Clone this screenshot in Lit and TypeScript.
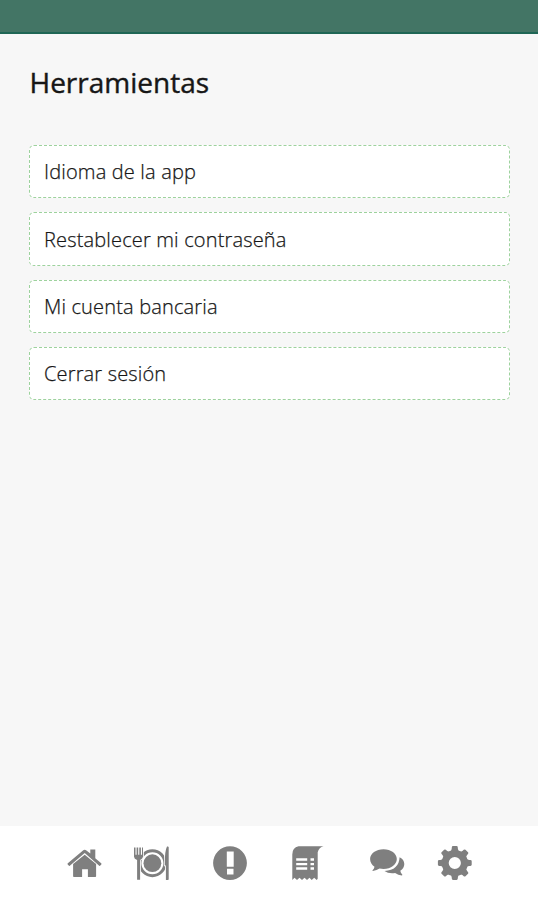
import { LitElement, html, css, svg } from "lit";
import { customElement } from "lit/decorators.js";

const teeth = [0, 45, 90, 135, 180, 225, 270, 315];

const icons = [
  // home
  svg`<g transform="translate(.7 .1)"><path d="M18 9.600 29.400 19v12.200a.8.8 0 0 1-.8.8h-7.400v-7.800h-5.800V32H7.200a.8.8 0 0 1-.8-.8V19z"/>
    <path d="M18 4.600q.9 0 1.700.7l3.900 3.200V4.500h5v8.700l5.900 5q.6.500.1 1.100l-1 1.200q-.5.500-1.100.1L18 8 3.100 20.600q-.6.400-1.100-.1l-1-1.200q-.5-.6.1-1.100L16.300 5.300q.8-.7 1.700-.7z"/></g>`,
  // plate with cutlery
  svg`<circle cx="19.400" cy="18.200" r="8.900"/>
    <circle class="rim" cx="19.400" cy="18.200" r="12.500"/>
    <path class="cut" d="M1 2.500h1.500v7.300h1.100V2.500h1.600v7.300h1.100V2.500h1.600v7.300H9V2.500h1v9.300q-.2 2.100-2.900 3.200v19.700H4.100V15Q1.200 14 1 11.800z"/>
    <path class="cut" d="M34 1.600q1.400-.6 1.700.6v32q0 .8-.8.8h-2V20.500h-1.200Q31.600 6 34 1.600z"/>`,
  // alert
  svg`<path fill-rule="evenodd" d="M18 1.200a16.900 16.900 0 1 0 0 33.800 16.900 16.900 0 0 0 0-33.800zM14.800 6.400h6.900v15.300h-6.900zM15 23.700h6.500v5.700H15z"/>`,
  // receipt
  svg`<path fill-rule="evenodd" d="M9.500 1.300H34.500Q30 2.500 28.700 7.300v26.400l-1 1.300-2.500-2.200-2.500 2.200-2.200-2.200-2.500 2.200-2.500-2.200-2.500 2.200-2.500-2.200-2.500 2.200-2.500-2.200L3.300 35V9.500q0-7 6.200-8.200zM7.200 13.300v2.400h11v-2.400zM7.200 18v2.200h11V18zM7.200 22.300v2.400h11v-2.400zM21.500 13.300v2.400h3.500v-2.400zM21.500 18v2.200H25V18zM21.500 22.300v2.400H25v-2.400z"/>`,
  // chat
  svg`<path d="M14.500 4.200c7.500 0 13.300 4.300 13.300 9.800s-5.800 9.900-13.300 9.900q-2 0-3.900-.3-2.900 2-6.700 2.400-.8-.1-.3-.8 1.500-1.400 1.900-3.500C2.700 19.900 1.100 17 1.100 14c0-5.500 5.900-9.800 13.400-9.800z"/>
    <path d="M30.600 12.200c3 1.500 4.700 3.900 4.700 6.700 0 3-1.600 5.300-4 6.800q.3 2 1.900 3.900.5.700-.3 1-3.700-.3-6.800-2.600-6.400 1-10.600-2Q30 25 30.600 12.200z"/>`,
  // settings
  svg`<circle class="ring" cx="17.800" cy="18" r="9.600"/>
    ${teeth.map(
      (a) =>
        svg`<path transform="rotate(${a} 17.800 18)" d="M12.800 7q1.700-1 1.900-3.300l.1-1.300q.1-1.300 1.200-1.300h3.600q1.100 0 1.200 1.300l.1 1.300q.2 2.300 1.900 3.300z"/>`
    )}`,
];

const labels = ["Inicio", "Menú", "Avisos", "Recibos", "Mensajes", "Herramientas"];

@customElement("app-root")
export class AppRoot extends LitElement {
  static styles = css`
    :host {
      display: flex;
      flex-direction: column;
      height: 100vh;
      background: #f7f7f7;
      color: #161616;
      font-family: "Open Sans", "Noto Sans", sans-serif;
      overflow: hidden;
    }
    .status {
      flex: none;
      box-sizing: border-box;
      height: 34px;
      background: #437565;
      border-bottom: 2px solid #1f6655;
    }
    main {
      flex: 1;
      padding: 29px 28px 0 29px;
    }
    h1 {
      margin: 0 0 43px;
      padding-left: 0.500px;
      font-size: 28px;
      line-height: 39px;
      font-weight: 400;
      -webkit-text-stroke: 0.400px #161616;
    }
    .list {
      display: grid;
      grid-auto-rows: 53.300px;
      gap: 14.100px;
    }
    .item {
      box-sizing: border-box;
      display: flex;
      align-items: center;
      padding: 0 14px;
      border: 1px dashed #9dd29d;
      border-radius: 5px;
      background: #fff;
      font-size: 20px;
      font-weight: 300;
      letter-spacing: 0.160px;
      -webkit-text-stroke: 0.250px #161616;
    }
    nav {
      flex: none;
      box-sizing: border-box;
      height: 74px;
      padding: 19px 0 0 66px;
      background: #fff;
      display: grid;
      grid-template-columns: 67px 79px 77px 80px 68px 36px;
    }
    svg {
      display: block;
      width: 36px;
      height: 36px;
      fill: #7f7f7f;
    }
    .ring {
      fill: none;
      stroke: #7f7f7f;
      stroke-width: 7px;
    }
    .rim {
      fill: none;
      stroke: #7f7f7f;
      stroke-width: 3px;
    }
    .cut {
      stroke: #fff;
      stroke-width: 1.600px;
      paint-order: stroke;
    }
  `;

  render() {
    return html`
      <div class="status"></div>
      <main>
        <h1>Herramientas</h1>
        <div class="list">
          ${["Idioma de la app", "Restablecer mi contraseña", "Mi cuenta bancaria", "Cerrar sesión"].map(
            (t) => html`<div class="item"><span>${t}</span></div>`
          )}
        </div>
      </main>
      <nav>
        ${icons.map((icon, i) => html`<svg viewBox="0 0 36 36" role="img" aria-label=${labels[i]}>${icon}</svg>`)}
      </nav>
    `;
  }
}
